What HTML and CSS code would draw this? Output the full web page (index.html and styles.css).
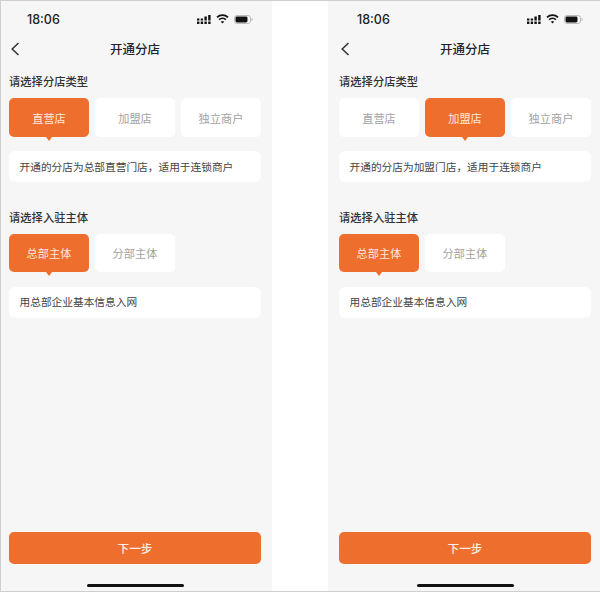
FILE: index.html

```html
<!DOCTYPE html>
<html lang="zh-CN">
<head>
    <meta charset="UTF-8">
    <title>开通分店</title>
    <link rel="stylesheet" href="styles.css">
</head>
<body>
    <div class="page">
        <!-- Left phone: 直营店 selected -->
        <div class="phone">
            <div class="status-bar">
                <span class="time">18:06</span>
                <span class="status-icons">
                    <svg width="14" height="9" viewBox="0 0 14 9" fill="#111"><path d="M0 3.4h2.4v2.2H0zM0 6.6h2.4V9H0zM3.7 3.4h2.4v2.2H3.7zM3.7 6.6h2.4V9H3.7zM7.4 1.6h2.4v4H7.4zM7.4 6.6h2.4V9H7.4zM11.2 0h2.4v5.6h-2.4zM11.2 6.6h2.4V9h-2.4z"/></svg>
                    <svg width="13" height="10" viewBox="0 0 13 10" fill="none" stroke="#111" stroke-width="1.7"><path d="M1 3.4a8 8 0 0 1 11 0"/><path d="M3.1 5.6a5 5 0 0 1 6.8 0"/><path d="M6.5 9.6 4.9 7.7a2.3 2.3 0 0 1 3.2 0z" fill="#111" stroke="none"/></svg>
                    <svg width="19" height="9" viewBox="0 0 19 9"><rect x="0.5" y="0.5" width="16" height="8" rx="2.4" fill="none" stroke="#bbb"/><rect x="1.5" y="1.5" width="12" height="6" rx="1.4" fill="#111"/><path d="M17.6 3v3a1.6 1.6 0 0 0 0-3z" fill="#aaa"/></svg>
                </span>
            </div>
            <div class="nav-bar">
                <svg class="back" width="9" height="14" viewBox="0 0 9 14" fill="none" stroke="#333" stroke-width="1.5"><path d="M7.5 1 1.2 7l6.3 6"/></svg>
                <span class="nav-title">开通分店</span>
            </div>

            <div class="section">
                <div class="section-title">请选择分店类型</div>
                <div class="tabs">
                    <div class="tab active">直营店</div>
                    <div class="tab">加盟店</div>
                    <div class="tab">独立商户</div>
                </div>
                <div class="desc">开通的分店为总部直营门店&#65292;适用于连锁商户</div>
            </div>

            <div class="section">
                <div class="section-title">请选择入驻主体</div>
                <div class="tabs">
                    <div class="tab active">总部主体</div>
                    <div class="tab">分部主体</div>
                </div>
                <div class="desc">用总部企业基本信息入网</div>
            </div>

            <button class="next-btn">下一步</button>
            <div class="home-bar"></div>
        </div>

        <!-- Right phone: 加盟店 selected -->
        <div class="phone">
            <div class="status-bar">
                <span class="time">18:06</span>
                <span class="status-icons">
                    <svg width="14" height="9" viewBox="0 0 14 9" fill="#111"><path d="M0 3.4h2.4v2.2H0zM0 6.6h2.4V9H0zM3.7 3.4h2.4v2.2H3.7zM3.7 6.6h2.4V9H3.7zM7.4 1.6h2.4v4H7.4zM7.4 6.6h2.4V9H7.4zM11.2 0h2.4v5.6h-2.4zM11.2 6.6h2.4V9h-2.4z"/></svg>
                    <svg width="13" height="10" viewBox="0 0 13 10" fill="none" stroke="#111" stroke-width="1.7"><path d="M1 3.4a8 8 0 0 1 11 0"/><path d="M3.1 5.6a5 5 0 0 1 6.8 0"/><path d="M6.5 9.6 4.9 7.7a2.3 2.3 0 0 1 3.2 0z" fill="#111" stroke="none"/></svg>
                    <svg width="19" height="9" viewBox="0 0 19 9"><rect x="0.5" y="0.5" width="16" height="8" rx="2.4" fill="none" stroke="#bbb"/><rect x="1.5" y="1.5" width="12" height="6" rx="1.4" fill="#111"/><path d="M17.6 3v3a1.6 1.6 0 0 0 0-3z" fill="#aaa"/></svg>
                </span>
            </div>
            <div class="nav-bar">
                <svg class="back" width="9" height="14" viewBox="0 0 9 14" fill="none" stroke="#333" stroke-width="1.5"><path d="M7.5 1 1.2 7l6.3 6"/></svg>
                <span class="nav-title">开通分店</span>
            </div>

            <div class="section">
                <div class="section-title">请选择分店类型</div>
                <div class="tabs">
                    <div class="tab">直营店</div>
                    <div class="tab active">加盟店</div>
                    <div class="tab">独立商户</div>
                </div>
                <div class="desc">开通的分店为加盟门店&#65292;适用于连锁商户</div>
            </div>

            <div class="section">
                <div class="section-title">请选择入驻主体</div>
                <div class="tabs">
                    <div class="tab active">总部主体</div>
                    <div class="tab">分部主体</div>
                </div>
                <div class="desc">用总部企业基本信息入网</div>
            </div>

            <button class="next-btn">下一步</button>
            <div class="home-bar"></div>
        </div>
    </div>
</body>
</html>
```

FILE: styles.css

```css
body {
    margin: 0;
    background: #fff;
    font-family: "Noto Sans CJK SC", "Liberation Sans", sans-serif;
}
.page {
    display: flex;
    gap: 56px;
    box-sizing: border-box;
    width: 600px;
    height: 592px;
    overflow: hidden;
    background: #fff;
    border: 1px solid #cfcfcf;
    border-right: none;
}
.phone {
    display: flex;
    flex-direction: column;
    flex-shrink: 0;
    box-sizing: border-box;
    width: 274px;
    padding: 0 11px;
    background: #f6f6f7;
}
.phone:first-child {
    margin-left: -3px;
}
.status-bar {
    display: flex;
    justify-content: space-between;
    align-items: center;
    height: 36px;
    padding: 0 8px 0 18px;
}
.time {
    font-family: Inter, "Liberation Sans", sans-serif;
    font-size: 12.5px;
    font-weight: 500;
    color: #222;
}
.status-icons {
    display: flex;
    align-items: center;
    gap: 5px;
}
.nav-bar {
    position: relative;
    display: flex;
    justify-content: center;
    align-items: center;
    box-sizing: border-box;
    height: 24px;
    padding-bottom: 2px;
}
.back {
    position: absolute;
    left: 2px;
    top: 5px;
}
.nav-title {
    font-size: 12.5px;
    font-weight: 500;
    color: #222;
}
.section {
    margin-top: 13px;
    margin-bottom: 14.5px;
}
.section-title {
    height: 16px;
    margin-bottom: 8px;
    font-size: 11.3px;
    font-weight: 500;
    line-height: 14px;
    color: #333;
}
.tabs {
    display: flex;
    gap: 6px;
}
.tab {
    display: flex;
    justify-content: center;
    align-items: center;
    position: relative;
    box-sizing: border-box;
    width: 80px;
    height: 38.5px;
    padding-top: 1px;
    background: #fff;
    border-radius: 5px;
    font-size: 11.2px;
    color: #a2a2a2;
}
.tab.active {
    background: #ee6e2e;
    color: #fde9dd;
}
/* little arrow under the selected tab */
.tab.active::after {
    content: "";
    position: absolute;
    left: 50%;
    bottom: -4px;
    margin-left: -3.5px;
    border-left: 3.5px solid transparent;
    border-right: 3.5px solid transparent;
    border-top: 4px solid #ee6e2e;
}
.desc {
    display: flex;
    align-items: center;
    box-sizing: border-box;
    height: 31px;
    margin-top: 14.5px;
    padding: 0 10.5px 1px;
    background: #fff;
    border-radius: 6px;
    font-size: 10.7px;
    color: #444;
}
.next-btn {
    margin-top: auto;
    height: 32px;
    border: none;
    border-radius: 5px;
    background: #ee6e2e;
    font-family: inherit;
    font-size: 11.7px;
    font-weight: 500;
    color: #fdeee5;
}
.home-bar {
    align-self: center;
    width: 97px;
    height: 3.5px;
    margin-top: 20px;
    margin-bottom: 4px;
    border-radius: 2px;
    background: #111;
}
```
